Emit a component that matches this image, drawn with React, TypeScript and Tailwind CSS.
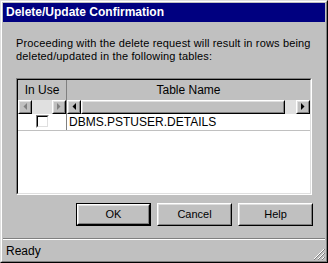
import React from 'react';

const font = { fontFamily: '"Liberation Sans", Arial, sans-serif' };

// raised 3d frame like a win9x button
const Raised: React.FC<{ className?: string; children?: React.ReactNode }> = ({ className = '', children }) => (
  <div className={`border border-t-white border-l-white border-r-black border-b-black ${className}`}>
    <div className="w-full h-full border border-t-[#dfdfdf] border-l-[#dfdfdf] border-r-[#808080] border-b-[#808080] bg-[#c0c0c0] flex items-center justify-center">
      {children}
    </div>
  </div>
);

const Arrow: React.FC<{ dir: 'l' | 'r'; disabled?: boolean }> = ({ dir, disabled }) => (
  <svg width="4" height="7" viewBox="0 0 4 7">
    {dir === 'l' ? (
      <polygon points="4,0 4,7 0.5,3.5" fill={disabled ? '#808080' : '#000'} />
    ) : (
      <polygon points="0,0 0,7 3.5,3.5" fill={disabled ? '#808080' : '#000'} />
    )}
  </svg>
);

const Button: React.FC<{ label: string; isDefault?: boolean }> = ({ label, isDefault }) => (
  <div className={`w-[75px] h-[23px] ${isDefault ? 'border border-black' : ''}`}>
    <Raised className="w-full h-full">
      <span className="text-[11px] text-black" style={font}>{label}</span>
    </Raised>
  </div>
);

export default function App() {
  return (
    <div className="w-[328px] h-[263px] border border-t-[#dfdfdf] border-l-[#dfdfdf] border-r-black border-b-black bg-[#c0c0c0]">
      <div className="w-full h-full border border-t-white border-l-white border-r-[#808080] border-b-[#808080] p-px flex flex-col">
        {/* title bar */}
        <div className="h-[19px] bg-[#000080] flex items-center px-[3px]">
          <span className="text-white font-bold text-[12px]" style={font}>Delete/Update Confirmation</span>
        </div>

        <div className="px-[13px] pt-[15px] text-[11px] leading-[13px] tracking-[0.15px] text-black whitespace-nowrap" style={font}>
          <p>Proceeding with the delete request will result in rows being</p>
          <p>deleted/updated in the following tables:</p>
        </div>

        {/* grid */}
        <div className="mx-[13px] mt-[15px] h-[119px] border border-t-[#808080] border-l-[#808080] border-r-white border-b-white">
          <div className="w-full h-full border border-t-black border-l-black border-r-[#dfdfdf] border-b-[#dfdfdf] bg-white flex flex-col">
            <div className="flex">
              {/* In Use column */}
              <div className="w-[49px] bg-[#c0c0c0] border-r border-[#808080] flex flex-col">
                <div className="h-[20px] flex items-center justify-center text-[12px] text-black" style={font}>In Use</div>
                <div className="h-[14px] flex">
                  <Raised className="w-[14px] h-full"><Arrow dir="l" disabled /></Raised>
                  <div className="flex-1 bg-[#e0e0e0]" />
                  <Raised className="w-[14px] h-full"><Arrow dir="r" disabled /></Raised>
                </div>
              </div>
              {/* Table Name column */}
              <div className="flex-1 bg-[#c0c0c0] flex flex-col">
                <div className="h-[20px] flex items-center justify-center text-[12px] text-black" style={font}>Table Name</div>
                <div className="h-[14px] flex">
                  <Raised className="w-[14px] h-full"><Arrow dir="l" /></Raised>
                  <Raised className="w-[204px] h-full" />
                  <div className="flex-1 bg-[#e0e0e0]" />
                  <Raised className="w-[14px] h-full"><Arrow dir="r" /></Raised>
                </div>
              </div>
            </div>
            {/* data row */}
            <div className="flex h-[17px] border-b border-[#c0c0c0]">
              <div className="w-[49px] border-r border-[#808080] flex items-center justify-center">
                <div className="w-[13px] h-[13px] border border-t-[#808080] border-l-[#808080] border-r-white border-b-white">
                  <div className="w-full h-full border border-t-black border-l-black border-r-[#dfdfdf] border-b-[#dfdfdf] bg-white" />
                </div>
              </div>
              <div className="flex-1 flex items-center pl-[2px] text-[12px] text-black" style={font}>DBMS.PSTUSER.DETAILS</div>
            </div>
          </div>
        </div>

        {/* buttons */}
        <div className="flex justify-end gap-[6px] pr-[12px] mt-[8px]">
          <Button label="OK" isDefault />
          <Button label="Cancel" />
          <Button label="Help" />
        </div>

        {/* status bar */}
        <div className="mt-[12px] border-t border-[#808080] flex-1 flex flex-col">
          <div className="border-t border-white flex-1 flex items-center justify-between pl-[3px]">
            <span className="text-[12px] text-black pt-[2px]" style={font}>Ready</span>
            <svg width="12" height="12" viewBox="0 0 12 12" className="self-end">
              <line x1="11" y1="1" x2="1" y2="11" stroke="#fff" />
              <line x1="12" y1="1" x2="1" y2="12" stroke="#808080" />
              <line x1="11" y1="5" x2="5" y2="11" stroke="#fff" />
              <line x1="12" y1="5" x2="5" y2="12" stroke="#808080" />
              <line x1="11" y1="9" x2="9" y2="11" stroke="#fff" />
              <line x1="12" y1="9" x2="9" y2="12" stroke="#808080" />
            </svg>
          </div>
        </div>
      </div>
    </div>
  );
}
